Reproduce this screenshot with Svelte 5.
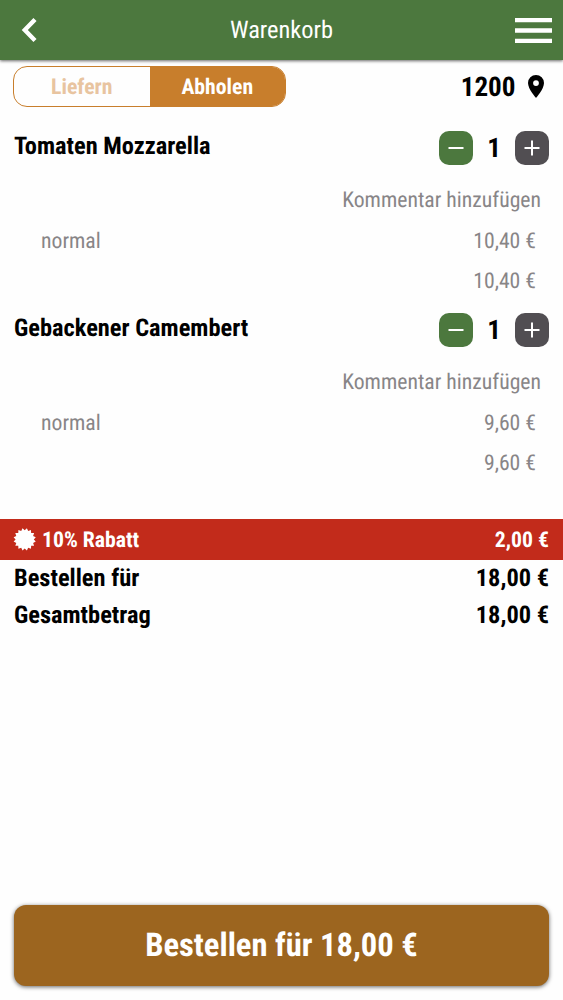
<script>
  let pickup = $state(true);
  let items = $state([
    { name: 'Tomaten Mozzarella', variant: 'normal', price: 10.4, count: 1 },
    { name: 'Gebackener Camembert', variant: 'normal', price: 9.6, count: 1 }
  ]);

  let sum = $derived(items.reduce((s, i) => s + i.price * i.count, 0));
  let discount = $derived(sum * 0.1);
  let total = $derived(sum - discount);

  const euro = (n) => n.toFixed(2).replace('.', ',') + ' €';

  // star badge outline, 16 spikes
  const star = Array.from({ length: 32 }, (_, i) => {
    const r = i % 2 ? 9.1 : 11.3;
    const a = ((i + 1) * Math.PI) / 16;
    return `${(10.7 + r * Math.sin(a)).toFixed(2)},${(10.4 - r * Math.cos(a)).toFixed(2)}`;
  }).join(' ');
</script>

<div class="page">
  <header>
    <button class="back" aria-label="Zurück">
      <svg width="16" height="26" viewBox="0 0 16 26"><path d="M14 2.500 3.800 13 14 23.500" fill="none" stroke="#fff" stroke-width="4.400" /></svg>
    </button>
    <h1><span class="t">Warenkorb</span></h1>
    <button class="menu" aria-label="Menü">
      <svg width="37" height="25"><path d="M0 2.200h37M0 12.500h37M0 22.800h37" stroke="#fff" stroke-width="4.300" /></svg>
    </button>
  </header>

  <div class="mode">
    <div class="tabs">
      <button class:active={!pickup} onclick={() => (pickup = false)}><span class="t">Liefern</span></button>
      <button class:active={pickup} onclick={() => (pickup = true)}><span class="t">Abholen</span></button>
    </div>
    <div class="place">
      <span class="t">1200</span>
      <svg width="16" height="23" viewBox="0 0 16 23"><path fill-rule="evenodd" d="M8 0a8 8 0 0 0-8 8c0 6 8 15 8 15s8-9 8-15a8 8 0 0 0-8-8zm0 5.200a2.900 2.900 0 1 1 0 5.800 2.900 2.900 0 0 1 0-5.800z" /></svg>
    </div>
  </div>

  {#each items as item}
    <section>
      <div class="head">
        <h2><span class="t">{item.name}</span></h2>
        <button class="step minus" aria-label="Weniger" onclick={() => (item.count = Math.max(0, item.count - 1))}>
          <svg width="34" height="34"><path d="M9.500 17h15" stroke="#fff" stroke-width="2" /></svg>
        </button>
        <span class="count t">{item.count}</span>
        <button class="step plus" aria-label="Mehr" onclick={() => item.count++}>
          <svg width="34" height="34"><path d="M9.500 17h15M17 9.500v15" stroke="#fff" stroke-width="2" /></svg>
        </button>
      </div>
      <div class="comment"><span class="t">Kommentar hinzufügen</span></div>
      <div class="line"><span class="t">{item.variant}</span><span class="t">{euro(item.price)}</span></div>
      <div class="line sub"><span class="t">{euro(item.price * item.count)}</span></div>
    </section>
  {/each}

  <div class="discount">
    <svg width="22" height="22" overflow="visible"><polygon points={star} fill="#fff" /></svg>
    <span class="t label">10% Rabatt</span>
    <span class="t amount">{euro(discount)}</span>
  </div>
  <div class="sum"><span class="t">Bestellen für</span><span class="t">{euro(total)}</span></div>
  <div class="sum"><span class="t">Gesamtbetrag</span><span class="t">{euro(total)}</span></div>

  <button class="order"><span class="t">Bestellen für {euro(total)}</span></button>
</div>

<style>
  .page {
    display: flex;
    flex-direction: column;
    height: 1000px;
    background: #fefefe;
    color: #000;
    font-family: 'Roboto Condensed', Roboto, sans-serif;
    font-stretch: 75%;
    font-size: 24.4px;
    text-rendering: geometricPrecision;
    overflow: hidden;
  }
  button {
    border: none;
    padding: 0;
    margin: 0;
    background: none;
    font: inherit;
    text-rendering: inherit;
    cursor: pointer;
  }
  svg { display: block; }
  h1, h2 { margin: 0; font-size: 24.4px; }
  .t { white-space: pre; }
  header {
    display: grid;
    grid-template-columns: 60px 1fr 60px;
    align-items: center;
    height: 60px;
    flex: none;
    background: #4c783e;
    color: #fff;
    box-shadow: 0 1px 3px rgba(0, 0, 0, 0.6);
  }
  h1 { font-weight: 400; text-align: center; padding-bottom: 2px; }
  .back { padding-left: 21px; }
  .menu {
    justify-self: end;
    margin-right: 11.5px;
  }
  .mode {
    display: flex;
    justify-content: space-between;
    align-items: center;
    padding: 6px 19px 0 13px;
  }
  .tabs {
    display: flex;
    width: 271px;
    height: 39px;
    border: 1px solid #c87e2c;
    border-radius: 14px;
    overflow: hidden;
  }
  .tabs button {
    flex: 1;
    padding-top: 2px;
    font-size: 21.7px;
    font-weight: 700;
    color: #e8c4a0;
  }
  .tabs button.active { background: #c87e2c; color: #fff; }
  .place {
    display: flex;
    align-items: center;
    gap: 12.5px;
    font-size: 27.1px;
    font-weight: 700;
  }
  section { height: 182px; flex: none; }
  .mode + section { margin-top: 22px; }
  .head {
    display: flex;
    align-items: center;
    height: 36px;
    padding: 1px 14px 0 14px;
  }
  h2 { flex: 1; font-weight: 700; padding-bottom: 6px; }
  .step { width: 34px; height: 34px; border-radius: 10px; }
  .minus { background: #4c783e; }
  .plus { background: #514e52; }
  .count { width: 42px; text-align: center; font-size: 27.1px; font-weight: 700; }
  .comment, .line { font-size: 21.7px; color: #888587; }
  .comment {
    margin-top: 15px;
    padding-right: 22px;
    line-height: 40px;
    text-align: right;
  }
  .line {
    display: flex;
    justify-content: space-between;
    padding: 0 27px 0 41px;
    line-height: 40px;
  }
  .comment + .line { margin-top: 1px; }
  .sub { justify-content: flex-end; }
  .discount {
    display: flex;
    align-items: center;
    height: 41px;
    flex: none;
    margin-top: 26px;
    padding: 0 14px;
    background: #c22b1b;
    color: #fff;
    font-size: 21.7px;
    font-weight: 700;
  }
  .label { flex: 1; margin-left: 6px; }
  .label, .amount { padding-top: 2px; }
  .sum {
    display: flex;
    justify-content: space-between;
    height: 37px;
    padding: 0 14px;
    line-height: 35px;
    font-weight: 700;
  }
  .order {
    height: 81px;
    margin: auto 14px 14px;
    padding-bottom: 2px;
    border-radius: 12px;
    background: #9c651f;
    color: #fff;
    font-size: 32.6px;
    font-weight: 700;
    box-shadow: 0 1px 4px rgba(0, 0, 0, 0.6);
  }
</style>
